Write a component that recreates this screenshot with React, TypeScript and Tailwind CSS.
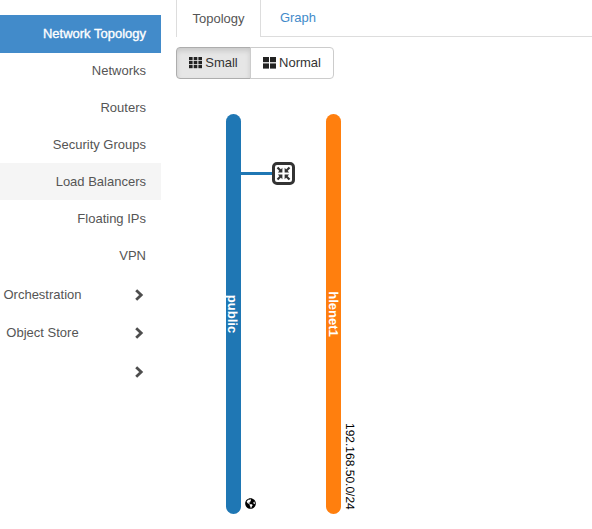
import { FaGlobeAmericas } from "react-icons/fa";

const ITEMS = ["Networks", "Routers", "Security Groups", "Load Balancers", "Floating IPs", "VPN"];

function Chevron() {
  return (
    <svg width="10" height="12" viewBox="0 0 10 12" className="shrink-0">
      <path d="M2.2 1.2 L7.2 6 L2.2 10.8" fill="none" stroke="#4d4d4d" strokeWidth="2.8" />
    </svg>
  );
}

function GroupRow({ label, className }: { label: string; className: string }) {
  return (
    <div className={`flex h-[38px] items-center ${className}`}>
      <span className="w-[85px] text-center">{label}</span>
      <span className="ml-[49px]"><Chevron /></span>
    </div>
  );
}

function ThIcon() {
  return (
    <svg width="13" height="12" viewBox="0 0 13 12" fill="#222">
      {[0, 4.7, 9.4].map((x) =>
        [0, 4, 8].map((y) => <rect key={`${x}-${y}`} x={x} y={y} width="3.6" height="3.2" />)
      )}
    </svg>
  );
}

function ThLargeIcon() {
  return (
    <svg width="13" height="12" viewBox="0 0 13 12" fill="#222">
      <rect x="0" y="0" width="6" height="5.2" />
      <rect x="7" y="0" width="6" height="5.2" />
      <rect x="0" y="6.4" width="6" height="5.2" />
      <rect x="7" y="6.4" width="6" height="5.2" />
    </svg>
  );
}

function Topology() {
  return (
    <svg width="416" height="450" className="block">
      <line x1="60" y1="94.5" x2="100" y2="94.5" stroke="#1f77b4" strokeWidth="3" />
      <rect x="50" y="35" width="15" height="400" rx="7.5" fill="#1f77b4" />
      <rect x="150" y="35" width="15" height="400" rx="7.5" fill="#ff7f0e" />
      <text
        transform="translate(52 235) rotate(90)"
        textAnchor="middle"
        textRendering="geometricPrecision"
        fontFamily="Liberation Sans, sans-serif"
        fontSize="13"
        fontWeight="700"
        fill="#fff"
      >
        public
      </text>
      <text
        transform="translate(153 235) rotate(90)"
        textAnchor="middle"
        textRendering="geometricPrecision"
        fontFamily="Liberation Sans, sans-serif"
        fontSize="13"
        fontWeight="700"
        fill="#fff"
      >
        hlenet1
      </text>
      <text
        transform="translate(170 344) rotate(90)"
        textRendering="geometricPrecision"
        fontFamily="Liberation Sans, sans-serif"
        fontSize="12"
        fill="#000"
      >
        192.168.50.0/24
      </text>
      <g transform="translate(96 83)">
        <rect x="1.5" y="1.5" width="20" height="20" rx="3.5" fill="#fff" stroke="#333" strokeWidth="3" />
        <g stroke="#333" strokeWidth="2.2" fill="none">
          <path d="M5.5 5.5 L9 9" />
          <path d="M17.5 5.5 L14 9" />
          <path d="M5.5 17.5 L9 14" />
          <path d="M17.5 17.5 L14 14" />
        </g>
        <g fill="#333">
          <path d="M10.4 5.8 V10.4 H5.8 Z" />
          <path d="M12.6 5.8 V10.4 H17.2 Z" />
          <path d="M10.4 17.2 V12.6 H5.8 Z" />
          <path d="M12.6 17.2 V12.6 H17.2 Z" />
        </g>
      </g>
      <g transform="translate(69 419)">
        <FaGlobeAmericas size={11} color="#000" />
      </g>
    </svg>
  );
}

export default function App() {
  return (
    <div className="flex h-[529px] w-[592px] overflow-hidden bg-white font-['Liberation_Sans',Arial,sans-serif] text-[13px] text-[#555]">
      <div className="w-[161px] shrink-0 pt-[15px]">
        <div className="-mb-px flex h-[38px] items-center justify-end bg-[#428bca] pr-[15px] text-white [-webkit-text-stroke:0.35px_white]">
          Network Topology
        </div>
        {ITEMS.map((item) => (
          <div
            key={item}
            className={`flex h-[37px] items-center justify-end pr-[15px] ${item === "Load Balancers" ? "bg-[#f5f5f5]" : ""}`}
          >
            {item}
          </div>
        ))}
        <GroupRow label="Orchestration" className="mt-[2px]" />
        <GroupRow label="Object Store" className="" />
        <GroupRow label="" className="mt-[1px]" />
      </div>
      <div className="min-w-0 flex-1 pl-[15px]">
        <div className="flex h-[37px] border-b border-[#ddd]">
          <div className="-mb-px flex h-[37px] w-[85px] items-center justify-center border-x border-[#ddd] bg-white">
            Topology
          </div>
          <div className="flex w-[74px] items-center justify-center text-[#428bca]">Graph</div>
        </div>
        <div className="mt-[10px] flex h-[32px] w-[158px] text-[#333]">
          <div className="flex w-[75px] items-center justify-center gap-[3px] rounded-l-[4px] border border-[#adadad] bg-[#e6e6e6] shadow-[inset_0_3px_5px_rgba(0,0,0,0.125)]">
            <ThIcon />
            Small
          </div>
          <div className="-ml-px flex flex-1 items-center justify-center gap-[3px] rounded-r-[4px] border border-[#ccc] bg-white">
            <ThLargeIcon />
            Normal
          </div>
        </div>
        <Topology />
      </div>
    </div>
  );
}
